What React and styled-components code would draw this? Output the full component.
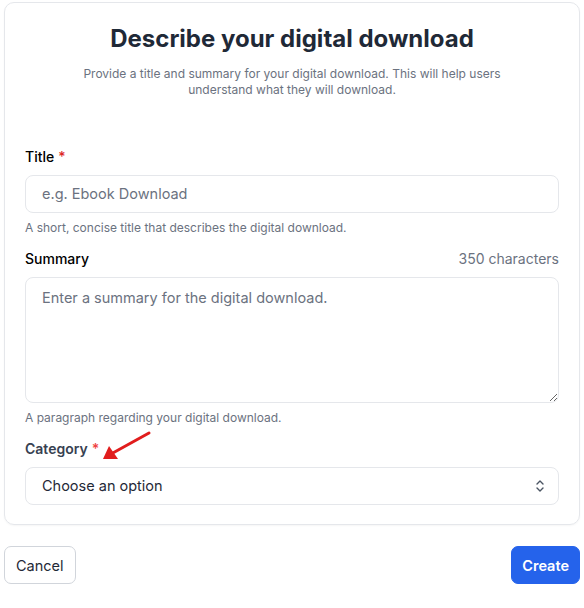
import React, { useState } from "react";
import styled, { createGlobalStyle } from "styled-components";

const GlobalStyle = createGlobalStyle`
  * { box-sizing: border-box; }
  body {
    margin: 0;
    padding: 2px 4px;
    font-family: Inter, "Noto Sans", sans-serif;
    background: #fff;
    color: #111827;
  }
`;

const Page = styled.div`
  display: flex;
  flex-direction: column;
  gap: 21px;
`;

const Card = styled.form`
  border: 1px solid #e5e7eb;
  border-radius: 10px;
  padding: 20px 20px 19px;
  box-shadow: 0 1px 2px rgba(0, 0, 0, 0.04);
`;

const Heading = styled.h1`
  margin: 0;
  text-align: center;
  font-size: 24px;
  line-height: 32px;
  font-weight: 700;
  color: #1f2937;
`;

const Lead = styled.p`
  margin: 11px auto 0;
  max-width: 440px;
  text-align: center;
  font-size: 12px;
  line-height: 16px;
  color: #6b7280;
`;

const Fields = styled.div`
  margin-top: 49px;
  display: flex;
  flex-direction: column;
`;

const Field = styled.div`
  display: flex;
  flex-direction: column;
  & + & { margin-top: 13px; }
`;

const LabelRow = styled.div`
  display: flex;
  justify-content: space-between;
  align-items: center;
  margin-bottom: 8px;
  font-size: 14px;
  line-height: 20px;
`;

const Label = styled.label`
  position: relative;
  font-weight: ${({ strong }) => (strong ? 600 : 500)};
  color: ${({ strong }) => (strong ? "#374151" : "#000")};
`;

const Required = styled.span`
  margin-left: 4px;
  color: ${({ soft }) => (soft ? "#ef4444" : "#dc2626")};
`;

const Counter = styled.span`
  color: #6b7280;
  font-size: 14px;
`;

const inputBase = `
  width: 100%;
  border: 1px solid #e5e7eb;
  border-radius: 8px;
  padding: 0 16px;
  font-family: Inter, "Noto Sans", sans-serif;
  font-size: 14.5px;
  color: #1f2937;
  background: #fff;
  outline: none;
  &::placeholder { color: #6b7280; }
`;

const TextInput = styled.input`
  ${inputBase}
  height: 38px;
  padding-bottom: 1px;
`;

const TextArea = styled.textarea`
  ${inputBase}
  display: block;
  height: 126px;
  padding-top: 10px;
  line-height: 20px;
  resize: vertical;
`;

const SelectWrap = styled.div`
  position: relative;
  display: flex;
  align-items: center;
`;

const Select = styled.select`
  ${inputBase}
  height: 38px;
  padding-bottom: 1px;
  appearance: none;
  cursor: pointer;
`;

const Chevron = styled.svg`
  position: absolute;
  right: 13px;
  pointer-events: none;
`;

const Hint = styled.p`
  margin: 7px 0 0;
  font-size: 12px;
  line-height: 16px;
  color: #6b7280;
`;

const Arrow = styled.svg`
  position: absolute;
  left: 76px;
  top: -8px;
  overflow: visible;
`;

const Actions = styled.div`
  display: flex;
  justify-content: space-between;
`;

const Button = styled.button`
  height: 38px;
  padding: 0 ${({ primary }) => (primary ? "10px" : "11px")};
  border-radius: 7px;
  font-family: Inter, "Noto Sans", sans-serif;
  font-size: 14.5px;
  font-weight: ${({ primary }) => (primary ? 600 : 400)};
  cursor: pointer;
  border: 1px solid ${({ primary }) => (primary ? "#2563eb" : "#d1d5db")};
  background: ${({ primary }) => (primary ? "#2563eb" : "#fff")};
  color: ${({ primary }) => (primary ? "#fff" : "#1f2937")};
`;

const App = () => {
  const [title, setTitle] = useState("");
  const [summary, setSummary] = useState("");
  const [category, setCategory] = useState("");

  return (
    <Page>
      <GlobalStyle />
      <Card onSubmit={(e) => e.preventDefault()}>
        <Heading>Describe your digital download</Heading>
        <Lead>
          Provide a title and summary for your digital download. This will help users
          understand what they will download.
        </Lead>
        <Fields>
          <Field>
            <LabelRow>
              <Label htmlFor="title">
                Title<Required>*</Required>
              </Label>
            </LabelRow>
            <TextInput
              id="title"
              placeholder="e.g. Ebook Download"
              value={title}
              onChange={(e) => setTitle(e.target.value)}
            />
            <Hint>A short, concise title that describes the digital download.</Hint>
          </Field>
          <Field>
            <LabelRow>
              <Label htmlFor="summary">Summary</Label>
              <Counter>{350 - summary.length} characters</Counter>
            </LabelRow>
            <TextArea
              id="summary"
              placeholder="Enter a summary for the digital download."
              value={summary}
              onChange={(e) => setSummary(e.target.value)}
            />
            <Hint>A paragraph regarding your digital download.</Hint>
          </Field>
          <Field>
            <LabelRow>
              <Label htmlFor="category" strong>
                Category<Required soft>*</Required>
                {/* red annotation arrow */}
                <Arrow width="50" height="30" viewBox="0 0 50 30">
                  <line x1="48" y1="2" x2="10" y2="23" stroke="#e11d1d" strokeWidth="3" strokeLinecap="round" />
                  <polygon points="2,28 8,15 17,28" fill="#e11d1d" />
                </Arrow>
              </Label>
            </LabelRow>
            <SelectWrap>
              <Select id="category" value={category} onChange={(e) => setCategory(e.target.value)}>
                <option value="">Choose an option</option>
                <option value="ebook">Ebook</option>
                <option value="audio">Audio</option>
                <option value="software">Software</option>
              </Select>
              <Chevron width="12" height="14" viewBox="0 0 12 14" fill="none">
                <path d="M3 5l3-3 3 3M3 9l3 3 3-3" stroke="#4b5563" strokeWidth="1.4" strokeLinecap="round" strokeLinejoin="round" />
              </Chevron>
            </SelectWrap>
          </Field>
        </Fields>
      </Card>
      <Actions>
        <Button type="button">Cancel</Button>
        <Button type="button" primary>Create</Button>
      </Actions>
    </Page>
  );
};

export default App;
